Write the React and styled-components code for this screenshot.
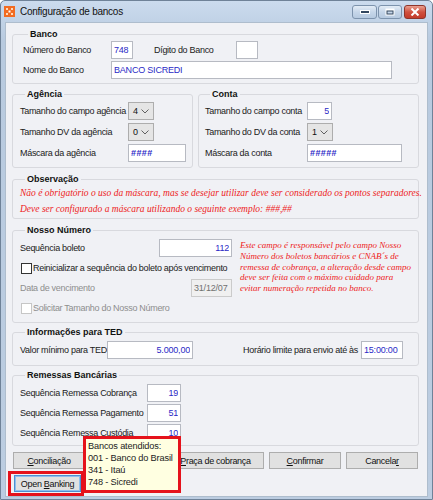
import React from 'react';
import styled, { createGlobalStyle } from 'styled-components';

const GlobalStyle = createGlobalStyle`
  html, body { margin: 0; padding: 0; background: #fff; }
  body {
    width: 433px; height: 500px; overflow: hidden;
    font-family: "Liberation Sans", Arial, sans-serif;
  }
  * { box-sizing: border-box; }
`;

const UI = `"Liberation Sans", Arial, sans-serif`;

const Window = styled.div`
  position: relative;
  width: 433px;
  height: 500px;
  display: flex;
  flex-direction: column;
  background: linear-gradient(#cbdbee, #b8cadf 40px, #bccde1);
  border: 1px solid #6f8298;
  border-radius: 5px 5px 0 0;
`;

const TitleBar = styled.div`
  height: 21px;
  flex: none;
  display: flex;
  align-items: center;
  padding: 0 6px 0 3px;
`;

const Title = styled.span`
  margin-left: 5px;
  font: 10px ${UI};
  letter-spacing: -0.25px;
  color: #111;
`;

const Controls = styled.div`
  margin-left: auto;
  display: flex;
  align-items: center;
  gap: 1px;
  margin-top: 1px;
`;

const CtrlBtn = styled.div`
  width: ${p => p.w}px;
  height: 14px;
  display: flex;
  align-items: center;
  justify-content: center;
  border: 1px solid ${p => (p.close ? '#8e352b' : '#7d93ad')};
  border-radius: 3px;
  margin-left: ${p => p.ml || 0}px;
  background: ${p =>
    p.close
      ? 'linear-gradient(#e9a090, #d0513f 50%, #c33b2a)'
      : 'linear-gradient(#e3ecf6, #c6d6e9 50%, #b7cae0)'};
`;

const Client = styled.div`
  flex: 1;
  margin: 0 4px 3px 4px;
  background: #f0f1f5;
  border: 1px solid #aebdcd;
  padding: 5px 8px 0 6px;
  display: flex;
  flex-direction: column;
  font: 9px ${UI};
  letter-spacing: -0.3px;
  color: #1b1b1b;
`;

const Group = styled.fieldset`
  margin: ${p => p.mt || 0}px 0 0;
  padding: ${p => p.pad};
  border: 1px solid #d8d9de;
  border-radius: 3px;
  min-width: 0;
  flex: ${p => (p.grow ? 1 : 'none')};
  width: ${p => (p.w ? `${p.w}px` : 'auto')};
`;

const Legend = styled.legend`
  margin-left: 5px;
  padding: 0 2px;
  font: bold 9px ${UI};
  letter-spacing: 0;
  line-height: 12px;
  color: #111;
`;

const Pair = styled.div`
  display: flex;
  gap: 5px;
  margin-top: 4px;
`;

const Row = styled.div`
  display: flex;
  align-items: center;
  height: 18px;
  margin-top: ${p => p.mt || 0}px;
`;

const Label = styled.span`
  flex: none;
  width: ${p => (p.w ? `${p.w}px` : 'auto')};
  margin-left: ${p => p.ml || 0}px;
  white-space: nowrap;
  color: ${p => (p.disabled ? '#8e8e8e' : '#1b1b1b')};
`;

const Input = styled.input`
  flex: none;
  width: ${p => p.w}px;
  height: 18px;
  margin: 0 0 0 ${p => p.ml || 0}px;
  padding: 0 2px;
  border: 1px solid ${p => (p.disabled ? '#cbcbcb' : '#b7bac2')};
  background: ${p => (p.disabled ? '#f0f0f0' : '#fff')};
  color: ${p => (p.disabled ? '#707070' : '#2a2ac6')};
  font: 9px ${UI};
  letter-spacing: ${p => (p.mask ? '0.4px' : '-0.2px')};
  font-weight: ${p => (p.mask ? 'bold' : 'normal')};
  text-align: ${p => (p.right ? 'right' : 'left')};
  outline: none;
  &:disabled { -webkit-text-fill-color: #707070; opacity: 1; }
`;

const Combo = styled.div`
  flex: none;
  width: ${p => p.w}px;
  height: 18px;
  display: flex;
  align-items: center;
  justify-content: space-between;
  padding: 0 4px 0 4px;
  border: 1px solid #adadad;
  background: #e5e5e5;
  color: #111;
`;

const Chevron = () => (
  <svg width="8" height="5" viewBox="0 0 8 5">
    <polyline points="0.5,0.5 4,4 7.5,0.5" fill="none" stroke="#606060" strokeWidth="1" />
  </svg>
);

const Note = styled.p`
  margin: ${p => p.mt || 0}px 0 0;
  font: italic ${p => p.size}px "Liberation Serif", "Times New Roman", serif;
  letter-spacing: 0;
  line-height: ${p => p.lh}px;
  color: #ee1b22;
  white-space: nowrap;
`;

const Split = styled.div`
  display: grid;
  grid-template-columns: 212px 1fr;
  column-gap: 8px;
`;

const Column = styled.div`
  display: flex;
  flex-direction: column;
`;

const CheckRow = styled.label`
  display: flex;
  align-items: center;
  height: 14px;
  margin-top: ${p => p.mt || 0}px;
  margin-left: 1px;
  white-space: nowrap;
  color: ${p => (p.disabled ? '#8e8e8e' : '#1b1b1b')};
`;

const Box = styled.span`
  width: 11px;
  height: 11px;
  flex: none;
  margin-right: 1px;
  background: #fff;
  border: 1px solid ${p => (p.disabled ? '#c6c6c6' : '#333')};
`;

const Spacer = styled.div`
  flex: 1;
`;

const ButtonRow = styled.div`
  display: flex;
  justify-content: space-between;
  align-items: center;
  margin-top: 6px;
  padding: 0 1px;
`;

const Button = styled.button`
  flex: none;
  width: ${p => p.w}px;
  height: 17px;
  margin: 0 0 0 ${p => p.ml || 0}px;
  padding: 0;
  background: #e1e1e1;
  border: 1px solid ${p => (p.focus ? '#4f8fd0' : '#adadad')};
  box-shadow: ${p => (p.focus ? 'inset 0 0 0 1px #8fc0ee' : 'none')};
  font: 9px ${UI};
  letter-spacing: -0.3px;
  color: #111;
  u { text-underline-offset: 1px; }
`;

const LowerRow = styled.div`
  display: flex;
  align-items: center;
  margin: 2px 0 0 -4px;
`;

const Highlight = styled.div`
  border: 3px solid #e5121b;
  padding: 1px 0 1px 3px;
  display: flex;
`;

const Tooltip = styled.div`
  position: absolute;
  left: 82px;
  top: 435px;
  width: 98px;
  height: 57px;
  border: 3px solid #e5121b;
  background: #ffffe1;
  padding: 1px 2px;
  font: 9.2px ${UI};
  letter-spacing: -0.15px;
  line-height: 12px;
  color: #222;
  white-space: nowrap;
`;

const AppIcon = () => (
  <svg width="11" height="11" viewBox="0 0 11 11">
    <rect width="11" height="11" fill="#f26b21" />
    <rect x="2" y="2" width="2" height="2" fill="#ffd9b8" />
    <rect x="7" y="2" width="2" height="2" fill="#ffd9b8" />
    <rect x="4.5" y="4.5" width="2" height="2" fill="#fff" />
    <rect x="2" y="7" width="2" height="2" fill="#ffd9b8" />
    <rect x="7" y="7" width="2" height="2" fill="#ffd9b8" />
  </svg>
);

export default function App() {
  return (
    <>
      <GlobalStyle />
      <Window>
        <TitleBar>
          <AppIcon />
          <Title>Configuração de bancos</Title>
          <Controls>
            <CtrlBtn w={25}>
              <svg width="10" height="4" viewBox="0 0 10 4">
                <rect x="0.5" y="0.5" width="9" height="3" fill="#33475f" stroke="#fff" strokeWidth="1" />
              </svg>
            </CtrlBtn>
            <CtrlBtn w={24}>
              <svg width="10" height="8" viewBox="0 0 10 8">
                <rect x="0.5" y="0.5" width="9" height="7" fill="#fff" />
                <rect x="2" y="3" width="6" height="3" fill="#c6d6e9" stroke="#33475f" strokeWidth="1" />
              </svg>
            </CtrlBtn>
            <CtrlBtn w={22} ml={1} close>
              <svg width="10" height="8" viewBox="0 0 10 8">
                <path d="M1.5 0.5 L8.5 7.5 M8.5 0.5 L1.5 7.5" stroke="#fff" strokeWidth="2" />
              </svg>
            </CtrlBtn>
          </Controls>
        </TitleBar>

        <Client>
          <Group pad="1px 0 4px 10px">
            <Legend>Banco</Legend>
            <Row>
              <Label w={88}>Número do Banco</Label>
              <Input w={22} defaultValue="748" />
              <Label w={82} ml={21}>Dígito do Banco</Label>
              <Input w={22} />
            </Row>
            <Row mt={2}>
              <Label w={88}>Nome do Banco</Label>
              <Input w={281} defaultValue="BANCO SICREDI" />
            </Row>
          </Group>

          <Pair>
            <Group w={181} pad="2px 0 5px 7px">
              <Legend>Agência</Legend>
              <Row>
                <Label w={108}>Tamanho do campo agência</Label>
                <Combo w={26}>4<Chevron /></Combo>
              </Row>
              <Row mt={3}>
                <Label w={108}>Tamanho DV da agência</Label>
                <Combo w={26}>0<Chevron /></Combo>
              </Row>
              <Row mt={3}>
                <Label w={108}>Máscara da agência</Label>
                <Input w={58} mask defaultValue="####" />
              </Row>
            </Group>
            <Group grow pad="2px 0 5px 6px">
              <Legend>Conta</Legend>
              <Row>
                <Label w={102}>Tamanho do campo conta</Label>
                <Input w={25} right defaultValue="5" />
              </Row>
              <Row mt={3}>
                <Label w={102}>Tamanho do DV da conta</Label>
                <Combo w={26}>1<Chevron /></Combo>
              </Row>
              <Row mt={3}>
                <Label w={102}>Máscara da conta</Label>
                <Input w={95} mask defaultValue="#####" />
              </Row>
            </Group>
          </Pair>

          <Group mt={5} pad="0 0 1px 7px">
            <Legend>Observação</Legend>
            <Note size={9.5} lh={16}>
              Não é obrigatório o uso da máscara, mas se desejar utilizar deve ser considerado os pontos separadores.
              <br />
              Deve ser configurado a máscara utilizando o seguinte exemplo: ###,##
            </Note>
          </Group>

          <Group mt={5} pad="3px 0 7px 7px">
            <Legend>Nosso Número</Legend>
            <Split>
              <Column>
                <Row>
                  <Label w={139}>Sequência boleto</Label>
                  <Input w={73} right defaultValue="112" />
                </Row>
                <CheckRow mt={4}>
                  <Box />
                  Reinicializar a sequência do boleto após vencimento
                </CheckRow>
                <Row mt={4}>
                  <Label w={171} disabled>Data de vencimento</Label>
                  <Input w={41} disabled defaultValue="31/12/07" />
                </Row>
                <CheckRow mt={4} disabled>
                  <Box disabled />
                  Solicitar Tamanho do Nosso Número
                </CheckRow>
              </Column>
              <Note size={9} lh={10.8} mt={1}>
                Este campo é responsável pelo campo Nosso
                <br />
                Número dos boletos bancários e CNAB´s de
                <br />
                remessa de cobrança, a alteração desde campo
                <br />
                deve ser feita com o máximo cuidado para
                <br />
                evitar numeração repetida no banco.
              </Note>
            </Split>
          </Group>

          <Group mt={3} pad="3px 15px 6px 7px">
            <Legend>Informações para TED</Legend>
            <Row>
              <Label w={87}>Valor mínimo para TED</Label>
              <Input w={86} right defaultValue="5.000,00" />
              <Spacer />
              <Label>Horário limite para envio até às</Label>
              <Input w={42} ml={3} defaultValue="15:00:00" />
            </Row>
          </Group>

          <Group mt={3} pad="3px 0 3px 7px">
            <Legend>Remessas Bancárias</Legend>
            <Row>
              <Label w={127}>Sequência Remessa Cobrança</Label>
              <Input w={34} right defaultValue="19" />
            </Row>
            <Row mt={2}>
              <Label w={127}>Sequência Remessa Pagamento</Label>
              <Input w={34} right defaultValue="51" />
            </Row>
            <Row mt={2}>
              <Label w={127}>Sequência Remessa Custódia</Label>
              <Input w={34} right defaultValue="10" />
            </Row>
          </Group>

          <ButtonRow>
            <Button w={72}><u>C</u>onciliação</Button>
            <Button w={72} aria-hidden="true" />
            <Button w={97}><u>P</u>raça de cobrança</Button>
            <Button w={72}><u>C</u>onfirmar</Button>
            <Button w={72}>Cancela<u>r</u></Button>
          </ButtonRow>

          <LowerRow>
            <Highlight>
              <Button w={67} focus>Open <u>B</u>anking</Button>
            </Highlight>
            <Button w={72} ml={6} aria-hidden="true" />
          </LowerRow>
        </Client>

        <Tooltip>
          Bancos atendidos:
          <br />
          001 - Banco do Brasil
          <br />
          341 - Itaú
          <br />
          748 - Sicredi
        </Tooltip>
      </Window>
    </>
  );
}
